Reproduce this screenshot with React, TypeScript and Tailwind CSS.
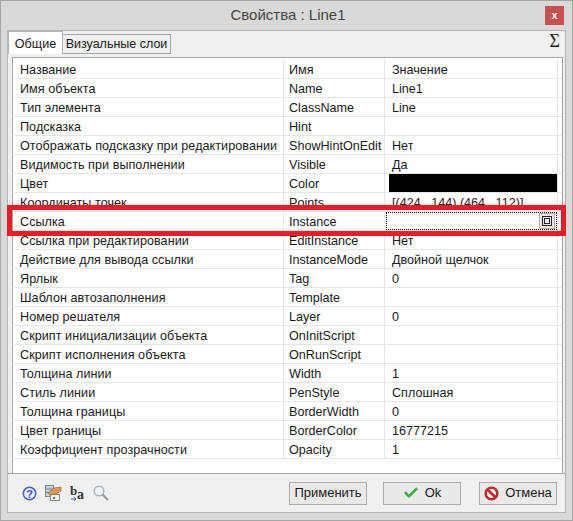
import { Check } from 'lucide-react';

const rows: [string, string, string][] = [
    ['Имя объекта', 'Name', 'Line1'],
    ['Тип элемента', 'ClassName', 'Line'],
    ['Подсказка', 'Hint', ''],
    ['Отображать подсказку при редактировании', 'ShowHintOnEdit', 'Нет'],
    ['Видимость при выполнении', 'Visible', 'Да'],
    ['Цвет', 'Color', '#black'],
    ['Координаты точек', 'Points', '[(424 , 144) (464 , 112)]'],
    ['Ссылка', 'Instance', '#edit'],
    ['Ссылка при редактировании', 'EditInstance', 'Нет'],
    ['Действие для вывода ссылки', 'InstanceMode', 'Двойной щелчок'],
    ['Ярлык', 'Tag', '0'],
    ['Шаблон автозаполнения', 'Template', ''],
    ['Номер решателя', 'Layer', '0'],
    ['Скрипт инициализации объекта', 'OnInitScript', ''],
    ['Скрипт исполнения объекта', 'OnRunScript', ''],
    ['Толщина линии', 'Width', '1'],
    ['Стиль линии', 'PenStyle', 'Сплошная'],
    ['Толщина границы', 'BorderWidth', '0'],
    ['Цвет границы', 'BorderColor', '16777215'],
    ['Коэффициент прозрачности', 'Opacity', '1'],
];

function ValueCell({ value }: { value: string }) {
    if (value === '#black') {
        return <div className="ml-[4px] h-[18px] flex-1 bg-black" />;
    }
    if (value === '#edit') {
        return (
            <div className="ml-[1px] flex h-[18px] flex-1 items-center justify-end border border-dotted border-black bg-white pr-[1px]">
                <div className="flex h-[16px] w-[16px] items-center justify-center border border-[#adadad] bg-[#e8e8e8]">
                    <svg width="10" height="10" viewBox="0 0 10 10">
                        <rect x="0.5" y="0.5" width="9" height="9" fill="none" stroke="#222" strokeWidth="1" />
                        <rect x="2.5" y="2.5" width="5" height="5" fill="none" stroke="#222" strokeWidth="1" />
                    </svg>
                </div>
            </div>
        );
    }
    return <span className="truncate pl-[7px] pt-[2px]">{value}</span>;
}

function Row({ name, ident, value }: { name: string; ident: string; value: string }) {
    return (
        <div className="flex h-[19px] border-b border-[#e6e6e6]">
            <div className="flex w-[270px] items-center border-r border-[#e6e6e6] pl-[6px] pt-[2px] tracking-[0.05px] whitespace-nowrap">{name}</div>
            <div className="flex w-[101px] items-center border-r border-[#e6e6e6] pl-[5px] pt-[2px]">{ident}</div>
            <div className="flex w-[173px] items-center border-r border-[#e6e6e6]">
                <ValueCell value={value} />
            </div>
        </div>
    );
}

function Button({ children, className }: { children: React.ReactNode; className: string }) {
    return (
        <button className={`flex h-[23px] items-center justify-center gap-[6px] border border-[#adadad] bg-[#e9e9e9] text-[13px] text-[#1a1a1a] ${className}`}>
            {children}
        </button>
    );
}

export default function App() {
    return (
        <div
            className="relative flex h-[521px] w-[573px] flex-col border border-[#a6a6a6] bg-[#d9d9d9] text-[12.6px] text-[#1a1a1a]"
            style={{ fontFamily: '"Liberation Sans", sans-serif' }}
        >
            <div className="relative flex h-[29px] shrink-0 items-center justify-center pl-[3px] text-[15px] text-[#444]">
                Свойства : Line1
                <div className="absolute right-[8px] top-[5px] flex h-[19px] w-[19px] items-center justify-center bg-[#c75050] text-[11px] font-bold text-white">
                    x
                </div>
            </div>

            <div className="mx-[6px] flex h-[483px] flex-col border border-[#b4b4b4] bg-[#f0f0f0]">
                <div className="relative flex h-[23px] shrink-0 items-end">
                    <div className="z-10 flex h-[23px] w-[55px] items-center justify-center border border-b-0 border-[#b4b4b4] bg-white pt-[2px]">
                        Общие
                    </div>
                    <div className="flex h-[20px] w-[108px] items-center justify-center border border-l-0 border-[#a6a6a6] bg-[#f0f0f0] text-[12.5px]">
                        Визуальные слои
                    </div>
                    <span className="absolute right-[5px] top-[0px] text-[18px] leading-[20px]" style={{ fontFamily: '"Liberation Serif", serif' }}>
                        Σ
                    </span>
                </div>

                <div className="mx-[4px] mt-[3px] h-[416px] w-[551px] border border-b-0 border-[#a6a6a6] bg-white pl-[1px] pt-[2px]">
                    <div className="flex h-[19px] border-b border-[#e6e6e6]">
                        <div className="flex w-[270px] items-center border-r border-[#e6e6e6] pl-[6px] pt-[2px]">Название</div>
                        <div className="flex w-[101px] items-center border-r border-[#e6e6e6] pl-[5px] pt-[2px]">Имя</div>
                        <div className="flex w-[173px] items-center border-r border-[#e6e6e6] pl-[7px] pt-[2px]">Значение</div>
                    </div>
                    {rows.map(([name, ident, value]) => (
                        <Row key={ident} name={name} ident={ident} value={value} />
                    ))}
                </div>

                <div className="flex flex-1 items-center border-t border-[#a6a6a6] pl-[14px] pr-[8px]">
                    <div className="flex items-center">
                        <svg width="15" height="15" viewBox="0 0 15 15">
                            <circle cx="7.5" cy="7.5" r="6.2" fill="#eef3ff" stroke="#3f62d0" strokeWidth="1.5" />
                            <text x="7.5" y="11.5" textAnchor="middle" fontSize="11" fontWeight="700" fill="#2f4fc0" fontFamily="Liberation Sans">?</text>
                        </svg>
                        <svg className="ml-[8px]" width="17" height="16" viewBox="0 0 17 16">
                            <rect x="0.5" y="0.5" width="8" height="11" fill="#c9cfd6" stroke="#7f8a94" />
                            <path d="M1 4 H8 M1 7.5 H8" stroke="#7f8a94" strokeWidth="1" />
                            <rect x="5.5" y="9.5" width="9" height="6" fill="#f4f4f4" stroke="#8a8a8a" />
                            <path d="M3 8 L9 3 L16 2 L16 6 L11 9 L5 10 Z" fill="#d99a52" stroke="#a86a2c" strokeWidth="0.7" />
                            <rect x="8" y="12" width="2" height="2" fill="#3a9a3a" />
                        </svg>
                        <div className="relative ml-[8px] h-[15px] w-[15px] text-[#333]" style={{ fontFamily: '"Liberation Serif", serif' }}>
                            <span className="absolute left-0 top-[-2px] text-[13px] font-bold leading-[14px]">b</span>
                            <span className="absolute left-[7px] top-[2px] text-[14px] font-bold leading-[14px]">a</span>
                            <svg className="absolute left-[1px] top-[11px]" width="6" height="4" viewBox="0 0 6 4">
                                <path d="M0 2 H5 M3 0.5 L5 2 L3 3.5" fill="none" stroke="#2f5fd0" strokeWidth="1" />
                            </svg>
                        </div>
                        <svg className="ml-[8px]" width="16" height="16" viewBox="0 0 16 16">
                            <circle cx="6" cy="6" r="4.8" fill="#eef3f8" stroke="#a9b3bb" strokeWidth="1.5" />
                            <path d="M9.5 9.5 L15 15" stroke="#9a9a9a" strokeWidth="2.2" />
                        </svg>
                    </div>
                    <div className="ml-auto flex gap-[16px]">
                        <Button className="w-[78px]">Применить</Button>
                        <Button className="w-[78px]">
                            <Check size={16} strokeWidth={4} className="text-[#3cae4a]" />
                            Ok
                        </Button>
                        <Button className="ml-[2px] w-[78px]">
                            <svg width="15" height="15" viewBox="0 0 15 15">
                                <circle cx="7.5" cy="7.5" r="5.8" fill="#fff" stroke="#c0282c" strokeWidth="2.6" />
                                <path d="M3.5 3.5 L11.5 11.5" stroke="#c0282c" strokeWidth="2.6" />
                            </svg>
                            Отмена
                        </Button>
                    </div>
                </div>
            </div>

            <div className="absolute left-[6px] top-[204px] h-[31px] w-[559px] border-[5px] border-[#ed1c24]" />
        </div>
    );
}
